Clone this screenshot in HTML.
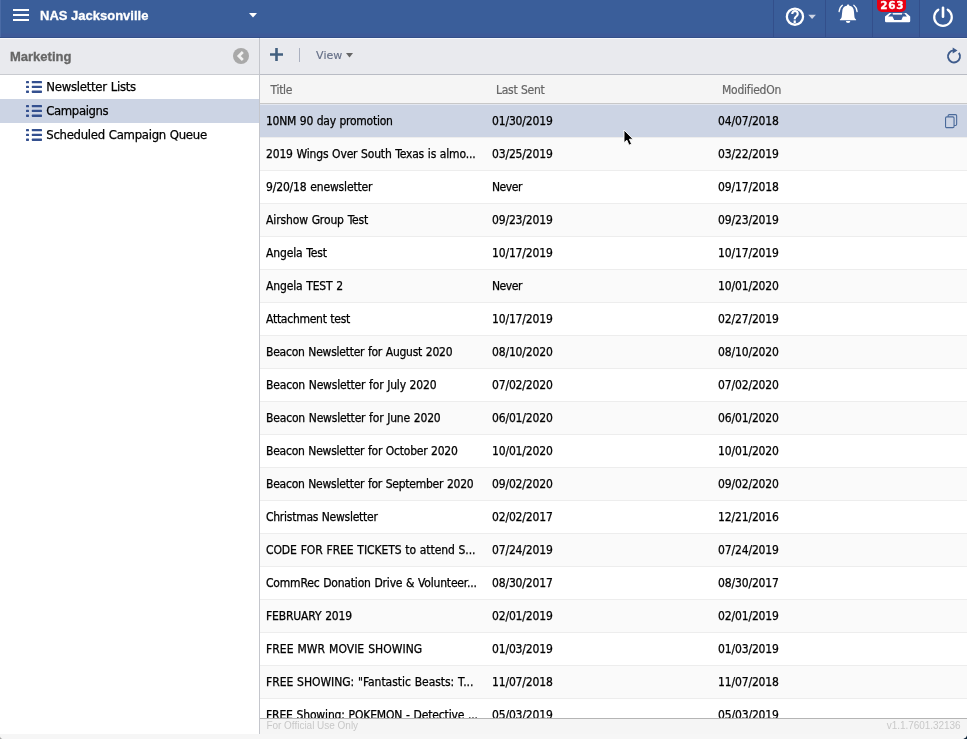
<!DOCTYPE html>
<html><head><meta charset="utf-8"><title>Campaigns</title>
<style>
html,body{margin:0;padding:0;}
body{word-spacing:0.500px;width:967px;height:739px;overflow:hidden;position:relative;background:linear-gradient(to right,#a4a4a4 0,#a4a4a4 50%,#0d2338 50%);font-family:"DejaVu Sans Condensed","DejaVu Sans","Liberation Sans",sans-serif;font-size:12px;color:#000;}
.abs{position:absolute;}
#top{left:0;top:0;width:967px;height:37px;background:linear-gradient(#3a5e9a 0,#3a5e9a 33px,#3d5a98 34px);border-bottom:1px solid #33508a;box-shadow:inset 1px 0 0 #4a6ba6;}
#top .bar{position:absolute;left:13px;width:16px;height:2px;background:#fff;}
#title{word-spacing:0;-webkit-text-stroke:0.300px #fff;left:40px;top:8px;font:bold 13px "Liberation Sans",sans-serif;color:#fff;white-space:nowrap;}
.vsep{position:absolute;top:0;width:1px;height:37px;background:#334f8b;}
#side{left:0;top:38px;width:259px;height:696px;background:#fff;border-right:1px solid #c4c6cc;}
#sidehead{left:0;top:38px;width:259px;height:36px;background:#e9eaee;box-shadow:inset 0 1px 0 #f6f8fb;border-bottom:1px solid #c9cbd0;}
#sidehead span{word-spacing:0;-webkit-text-stroke:0.300px #666;position:absolute;left:10px;top:11px;font:bold 13px "Liberation Sans",sans-serif;color:#666;}
.item{position:absolute;left:0;width:259px;height:24px;line-height:24px;white-space:nowrap;font-size:13px;}
.item.sel{background:#ccd4e4;}
.item span{position:absolute;left:46.300px;top:0;-webkit-text-stroke:0.250px #000;}
.item svg{position:absolute;left:26px;top:5px;}
#tool{left:260px;top:38px;width:707px;height:36px;background:#e9eaee;box-shadow:inset 0 1px 0 #f6f8fb;border-bottom:1px solid #b9bcc4;}
#colhead{left:260px;top:75px;width:707px;height:28px;background:#f5f5f5;border-bottom:1px solid #c8c8c8;color:#666;}
#colhead span{-webkit-text-stroke:0.200px #666;position:absolute;top:0;line-height:30px;white-space:nowrap;}
#grid{left:260px;top:104px;width:707px;height:614px;overflow:hidden;}
.row{position:relative;height:32px;border-top:1px solid #ededed;line-height:32px;white-space:nowrap;background:#fff;}
.row.alt{background:#fafafa;}
.row.sel{background:#ccd4e4;border-top-color:#e3e7f0;}
.row span{position:absolute;top:0;-webkit-text-stroke:0.250px #000;}
.c1{left:6px;}.c2{left:232px;}.c3{left:458px;}
.copy{position:absolute;left:685px;top:9px;}
#foot{left:260px;top:718px;width:707px;height:15px;background:#f5f5f5;border-top:1px solid #b5b5b5;font:10px "Liberation Sans",sans-serif;color:#c8c8c8;word-spacing:0;}
#bottom{left:0;top:734px;width:967px;height:5px;background:#f6f6f6;}
#app{position:absolute;left:0;top:0;width:967px;height:739px;overflow:hidden;will-change:transform;background:#fff;border-radius:0 0 5px 4px;}
</style></head><body><div id="app">
<div id="top" class="abs">
  <div class="bar" style="top:9px"></div><div class="bar" style="top:14px"></div><div class="bar" style="top:19px"></div>
  <div id="title" class="abs">NAS Jacksonville</div>
  <svg class="abs" style="left:249px;top:13px" width="8" height="5" viewBox="0 0 8 5"><path d="M0 0h8L4 4.5z" fill="#fff"/></svg>
  <div class="vsep" style="left:773px"></div><div class="vsep" style="left:825px"></div><div class="vsep" style="left:872px"></div><div class="vsep" style="left:919px"></div>
  <!-- help -->
  <svg class="abs" style="left:784px;top:6px" width="34" height="22" viewBox="0 0 34 22">
    <circle cx="10.950" cy="10.650" r="8.100" fill="none" stroke="#fff" stroke-width="2.300"/>
    <text transform="translate(10.950,17.100) scale(0.960,1.220)" x="0" y="0" text-anchor="middle" font-family="Liberation Sans, sans-serif" font-weight="bold" font-size="15.500" fill="#fff">?</text>
    <path d="M24.300 8.800h7.600l-3.800 4.300z" fill="#ccd3e4"/>
  </svg>
  <!-- bell -->
  <svg class="abs" style="left:836px;top:3px" width="24" height="22" viewBox="0 0 24 22">
    <path d="M12.100 1.600C11.400 1.600 10.900 2.100 10.900 2.800C8 3.200 6.200 5.200 6.200 9L5.700 13.600C5.600 15 4.900 15.900 3.900 16.600L3.900 17.300L20.100 17.300L20.100 16.600C19.100 15.900 18.500 15 18.400 13.600L18 9C18 5.200 16.200 3.200 13.300 2.800C13.300 2.100 12.800 1.600 12.100 1.600Z" fill="#fff"/>
    <path d="M9.900 18a2.200 2.100 0 0 0 4.400 0z" fill="#fff"/>
    <path d="M6.400 2.300C4.600 3.600 3.400 5.800 3.100 8.600M17.800 2.300C19.600 3.600 20.800 5.800 21.100 8.600" stroke="#fff" stroke-width="1.300" fill="none" stroke-linecap="round"/>
  </svg>
  <!-- inbox -->
  <svg class="abs" style="left:885px;top:12px" width="26" height="11" viewBox="0 0 26 11">
    <path d="M4.400 1L21.200 1L25.200 4.600V8.900Q25.200 10.200 23.900 10.200H1.300Q0 10.200 0 8.900V4.600Z" fill="#fff"/>
    <path d="M3.100 4.500L6.300 1.300L19.400 1.300L22 4.500L17.900 4.600L16.400 8L9.200 8L7.500 4.600Z" fill="#3a5e9a"/>
    <rect x="7.800" y="1.100" width="9.200" height="1.500" fill="#fff"/>
  </svg>
  <div class="abs" style="left:877px;top:-4px;width:29px;height:15.900px;border-radius:5px;background:#e80012;"></div>
  <div class="abs" style="left:877px;top:0;width:29px;height:11px;color:#fff;font:bold 10.500px 'DejaVu Sans','Liberation Sans',sans-serif;text-align:center;line-height:11px;letter-spacing:0.800px;text-indent:1.600px;-webkit-text-stroke:0.300px #fff;">263</div>
  <!-- power -->
  <svg class="abs" style="left:932px;top:5px" width="22" height="24" viewBox="0 0 22 24">
    <path d="M6.300 4.700a8.800 8.800 0 1 0 9.400 0" fill="none" stroke="#fff" stroke-width="2.200" stroke-linecap="round"/>
    <path d="M11 2.800v9" stroke="#fff" stroke-width="2.600" stroke-linecap="round"/>
  </svg>
</div>

<div id="side" class="abs"></div>
<div id="sidehead" class="abs"><span>Marketing</span>
  <svg class="abs" style="left:233px;top:10px" width="16" height="16" viewBox="0 0 16 16"><circle cx="8" cy="8" r="8" fill="#a9a9a9"/><path d="M9.800 4L5.800 8l4 4" fill="none" stroke="#f2f2f2" stroke-width="2.700"/></svg>
</div>
<div class="item abs" style="top:75px"><svg width="16" height="14" viewBox="0 0 16 14"><g fill="#34508f"><rect x="0" y="1" width="3" height="2.300" rx="0.600"/><rect x="5.800" y="1" width="10.200" height="2.300" rx="0.600"/><rect x="0" y="5.800" width="3" height="2.300" rx="0.600"/><rect x="5.800" y="5.800" width="10.200" height="2.300" rx="0.600"/><rect x="0" y="10.600" width="3" height="2.300" rx="0.600"/><rect x="5.800" y="10.600" width="10.200" height="2.300" rx="0.600"/></g></svg><span style="letter-spacing:-0.277px">Newsletter Lists</span></div>
<div class="item sel abs" style="top:99px"><svg width="16" height="14" viewBox="0 0 16 14"><g fill="#34508f"><rect x="0" y="1" width="3" height="2.300" rx="0.600"/><rect x="5.800" y="1" width="10.200" height="2.300" rx="0.600"/><rect x="0" y="5.800" width="3" height="2.300" rx="0.600"/><rect x="5.800" y="5.800" width="10.200" height="2.300" rx="0.600"/><rect x="0" y="10.600" width="3" height="2.300" rx="0.600"/><rect x="5.800" y="10.600" width="10.200" height="2.300" rx="0.600"/></g></svg><span style="letter-spacing:-0.391px">Campaigns</span></div>
<div class="item abs" style="top:123px"><svg width="16" height="14" viewBox="0 0 16 14"><g fill="#34508f"><rect x="0" y="1" width="3" height="2.300" rx="0.600"/><rect x="5.800" y="1" width="10.200" height="2.300" rx="0.600"/><rect x="0" y="5.800" width="3" height="2.300" rx="0.600"/><rect x="5.800" y="5.800" width="10.200" height="2.300" rx="0.600"/><rect x="0" y="10.600" width="3" height="2.300" rx="0.600"/><rect x="5.800" y="10.600" width="10.200" height="2.300" rx="0.600"/></g></svg><span style="letter-spacing:-0.29px">Scheduled Campaign Queue</span></div>

<div id="tool" class="abs">
  <svg class="abs" style="left:10px;top:10px" width="13" height="13" viewBox="0 0 13 13"><path d="M6.500 0v13M0 6.500h13" stroke="#43607f" stroke-width="2.600"/></svg>
  <div class="abs" style="left:39px;top:10px;width:1px;height:14px;background:#aab0bf"></div>
  <div class="abs" style="left:56.100px;top:11px;color:#667088;font:11px 'DejaVu Sans','Liberation Sans',sans-serif;line-height:13px;white-space:nowrap;letter-spacing:0.048px;-webkit-text-stroke:0.150px #667088;">View</div>
  <svg class="abs" style="left:86px;top:15px" width="8" height="5" viewBox="0 0 8 5"><path d="M0 0h7L3.500 4.500z" fill="#666"/></svg>
  <svg class="abs" style="left:686px;top:9px" width="16" height="18" viewBox="0 0 16 18"><path d="M12.85 5.87A6.0 6.0 0 1 1 7.70 3.40" fill="none" stroke="#3f5c8c" stroke-width="1.900"/><path d="M6.70 0.40L11.50 3.40L6.70 6.40z" fill="#3f5c8c"/></svg>
</div>
<div id="colhead" class="abs"><span style="left:10.500px;letter-spacing:-0.282px">Title</span><span style="left:236px;letter-spacing:-0.287px">Last Sent</span><span style="left:462px;letter-spacing:-0.232px">ModifiedOn</span></div>
<div id="grid" class="abs">
<div class="row sel"><span class="c1" style="letter-spacing:-0.254px">10NM 90 day promotion</span><span class="c2" style="letter-spacing:-0.162px">01/30/2019</span><span class="c3" style="letter-spacing:-0.142px">04/07/2018</span><svg class="copy" width="13" height="15" viewBox="0 0 13 15"><rect x="3.150" y="0.650" width="8.500" height="10.800" rx="1.200" fill="none" stroke="#4a6a9a" stroke-width="1.100"/><rect x="0.550" y="2.850" width="8.500" height="10.800" rx="1.200" fill="#ccd4e4" stroke="#4a6a9a" stroke-width="1.100"/></svg></div>
<div class="row alt"><span class="c1" style="letter-spacing:-0.178px">2019 Wings Over South Texas is almo...</span><span class="c2" style="letter-spacing:-0.162px">03/25/2019</span><span class="c3" style="letter-spacing:-0.142px">03/22/2019</span></div>
<div class="row"><span class="c1" style="letter-spacing:-0.159px">9/20/18 enewsletter</span><span class="c2" style="letter-spacing:-0.458px">Never</span><span class="c3" style="letter-spacing:-0.142px">09/17/2018</span></div>
<div class="row alt"><span class="c1" style="letter-spacing:-0.127px">Airshow Group Test</span><span class="c2" style="letter-spacing:-0.162px">09/23/2019</span><span class="c3" style="letter-spacing:-0.142px">09/23/2019</span></div>
<div class="row"><span class="c1" style="letter-spacing:-0.139px">Angela Test</span><span class="c2" style="letter-spacing:-0.162px">10/17/2019</span><span class="c3" style="letter-spacing:-0.142px">10/17/2019</span></div>
<div class="row alt"><span class="c1" style="letter-spacing:-0.149px">Angela TEST 2</span><span class="c2" style="letter-spacing:-0.458px">Never</span><span class="c3" style="letter-spacing:-0.142px">10/01/2020</span></div>
<div class="row"><span class="c1" style="letter-spacing:-0.261px">Attachment test</span><span class="c2" style="letter-spacing:-0.162px">10/17/2019</span><span class="c3" style="letter-spacing:-0.142px">02/27/2019</span></div>
<div class="row alt"><span class="c1" style="letter-spacing:-0.24px">Beacon Newsletter for August 2020</span><span class="c2" style="letter-spacing:-0.162px">08/10/2020</span><span class="c3" style="letter-spacing:-0.142px">08/10/2020</span></div>
<div class="row"><span class="c1" style="letter-spacing:-0.176px">Beacon Newsletter for July 2020</span><span class="c2" style="letter-spacing:-0.162px">07/02/2020</span><span class="c3" style="letter-spacing:-0.142px">07/02/2020</span></div>
<div class="row alt"><span class="c1" style="letter-spacing:-0.175px">Beacon Newsletter for June 2020</span><span class="c2" style="letter-spacing:-0.162px">06/01/2020</span><span class="c3" style="letter-spacing:-0.142px">06/01/2020</span></div>
<div class="row"><span class="c1" style="letter-spacing:-0.236px">Beacon Newsletter for October 2020</span><span class="c2" style="letter-spacing:-0.162px">10/01/2020</span><span class="c3" style="letter-spacing:-0.142px">10/01/2020</span></div>
<div class="row alt"><span class="c1" style="letter-spacing:-0.242px">Beacon Newsletter for September 2020</span><span class="c2" style="letter-spacing:-0.162px">09/02/2020</span><span class="c3" style="letter-spacing:-0.142px">09/02/2020</span></div>
<div class="row"><span class="c1" style="letter-spacing:-0.257px">Christmas Newsletter</span><span class="c2" style="letter-spacing:-0.162px">02/02/2017</span><span class="c3" style="letter-spacing:-0.142px">12/21/2016</span></div>
<div class="row alt"><span class="c1" style="letter-spacing:-0.082px">CODE FOR FREE TICKETS to attend S...</span><span class="c2" style="letter-spacing:-0.162px">07/24/2019</span><span class="c3" style="letter-spacing:-0.142px">07/24/2019</span></div>
<div class="row"><span class="c1" style="letter-spacing:-0.186px">CommRec Donation Drive &amp; Volunteer...</span><span class="c2" style="letter-spacing:-0.162px">08/30/2017</span><span class="c3" style="letter-spacing:-0.142px">08/30/2017</span></div>
<div class="row alt"><span class="c1" style="letter-spacing:-0.15px">FEBRUARY 2019</span><span class="c2" style="letter-spacing:-0.162px">02/01/2019</span><span class="c3" style="letter-spacing:-0.142px">02/01/2019</span></div>
<div class="row"><span class="c1" style="letter-spacing:0.037px">FREE MWR MOVIE SHOWING</span><span class="c2" style="letter-spacing:-0.162px">01/03/2019</span><span class="c3" style="letter-spacing:-0.142px">01/03/2019</span></div>
<div class="row alt"><span class="c1" style="letter-spacing:-0.04px">FREE SHOWING: &quot;Fantastic Beasts: T...</span><span class="c2" style="letter-spacing:-0.162px">11/07/2018</span><span class="c3" style="letter-spacing:-0.142px">11/07/2018</span></div>
<div class="row"><span class="c1" style="letter-spacing:-0.153px">FREE Showing: POKEMON - Detective ...</span><span class="c2" style="letter-spacing:-0.162px">05/03/2019</span><span class="c3" style="letter-spacing:-0.142px">05/03/2019</span></div>
</div>
<div id="foot" class="abs"><span class="abs" style="left:6.400px;top:0px;line-height:13px;white-space:nowrap;letter-spacing:-0.017px">For Official Use Only</span><span class="abs" style="left:626.700px;top:0px;line-height:13px;white-space:nowrap;letter-spacing:-0.041px">v1.1.7601.32136</span></div>
<div id="bottom" class="abs"></div>
<!-- cursor -->
<svg class="abs" style="left:623.400px;top:129px" width="12" height="18" viewBox="0 0 12 18"><path d="M1 1v12.700l2.900-2.500 2.100 5 2.600-1.100-2.200-4.900H10.100z" fill="#000" stroke="#fff" stroke-width="0.900"/></svg>
</div></body></html>
